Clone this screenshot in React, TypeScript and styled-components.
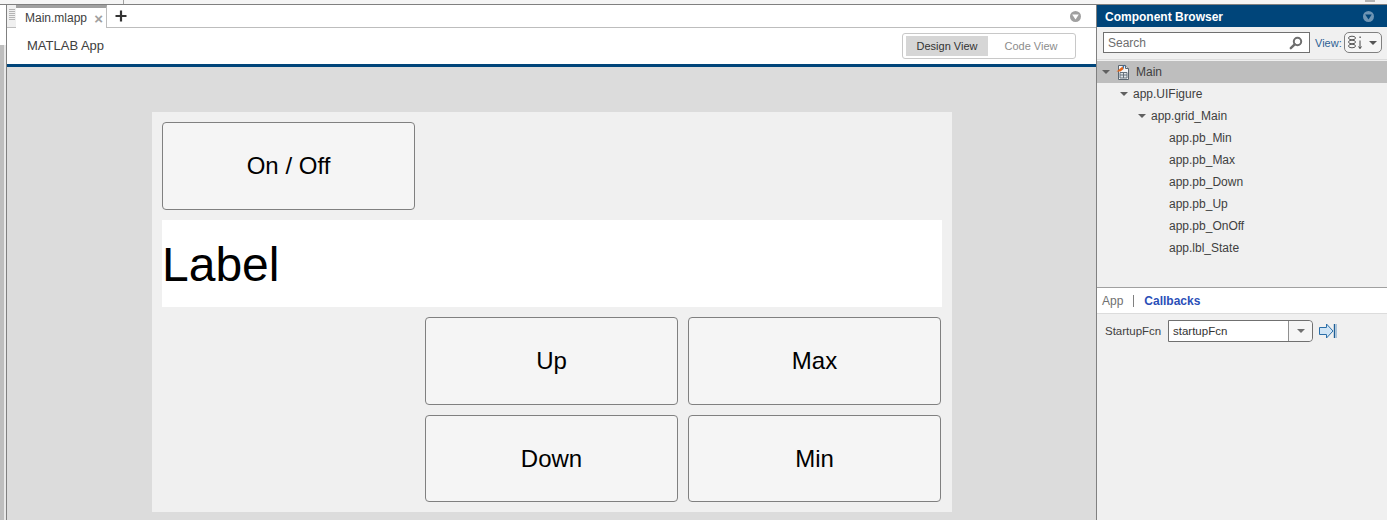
import styled, { createGlobalStyle } from "styled-components";

const GlobalStyle = createGlobalStyle`
  html, body {
    margin: 0;
    padding: 0;
    height: 520px;
    overflow: hidden;
    background: #f0f0f0;
    font-family: "Liberation Sans", Arial, sans-serif;
  }
`;

const treeRows = [
  { label: "app.UIFigure", level: 1, open: true },
  { label: "app.grid_Main", level: 2, open: true },
  { label: "app.pb_Min", level: 3 },
  { label: "app.pb_Max", level: 3 },
  { label: "app.pb_Down", level: 3 },
  { label: "app.pb_Up", level: 3 },
  { label: "app.pb_OnOff", level: 3 },
  { label: "app.lbl_State", level: 3 },
];

function Caret({ color = "#606060" }: { color?: string }) {
  return (
    <svg width="8" height="4" viewBox="0 0 8 4">
      <path d="M0 0h8L4 4z" fill={color} />
    </svg>
  );
}

function PanelMenu({ disc, mark }: { disc: string; mark: string }) {
  return (
    <svg width="11" height="11" viewBox="0 0 11 11">
      <circle cx="5.5" cy="5.5" r="5.5" fill={disc} />
      <path d="M2.2 3.4h6.6L5.5 8.6z" fill={mark} />
    </svg>
  );
}

function FileIcon() {
  return (
    <svg width="14" height="16" viewBox="0 0 14 16">
      <path d="M2.5 1.500h7l3 3v11h-10z" fill="#f4f6f8" stroke="#5b6670" />
      <path d="M9.500 1.500v3h3" fill="#d8dde2" stroke="#5b6670" />
      <path d="M4 8.500h7v5.500H4zM4 11h7M7.500 8.500V14" stroke="#66727c" fill="#dfe4e8" />
      <path d="M.5 7.500L6.500 2.500l1.200 2.400-3.200 2.600z" fill="#e2661c" />
      <path d="M6.500 2.500L8.500 .5l-.8 4.400z" fill="#2f6fb0" />
    </svg>
  );
}

function SearchIcon() {
  return (
    <svg width="14" height="14" viewBox="0 0 14 14">
      <circle cx="8.500" cy="5.500" r="3.700" fill="none" stroke="#6e6e6e" strokeWidth="2" />
      <path d="M5.700 8.300L1.800 12.200" stroke="#6e6e6e" strokeWidth="2.400" strokeLinecap="round" />
    </svg>
  );
}

function SortIcon() {
  return (
    <svg width="17" height="15" viewBox="0 0 17 15">
      <g fill="none" stroke="#555" strokeWidth="1">
        <ellipse cx="5" cy="3" rx="3.500" ry="1.800" />
        <ellipse cx="5" cy="7" rx="3.500" ry="1.800" />
        <ellipse cx="5" cy="11" rx="3.500" ry="1.800" />
      </g>
      <path d="M13 5.500v8M11.500 11.500l1.500 2 1.500-2" fill="none" stroke="#444" />
      <path d="M12.500 1.500h1.200v1.600h-1.200z" fill="#444" />
    </svg>
  );
}

function GoToIcon() {
  return (
    <svg width="18" height="16" viewBox="0 0 18 16">
      <path d="M.5 4.500h7V1L14 8l-6.500 7v-3.500h-7z" fill="#cfe4f5" stroke="#2a6ea8" />
      <path d="M15.500 1v14" stroke="#1f5f96" strokeWidth="1.400" />
      <path d="M17.200 1v14" stroke="#86add0" />
    </svg>
  );
}

function GripIcon() {
  return (
    <svg width="6" height="12" viewBox="0 0 6 12">
      <path d="M0 .5h6M0 2.500h6M0 4.500h6M0 6.500h6M0 8.500h6M0 10.500h6" stroke="#b4b4b4" />
    </svg>
  );
}

export default function App() {
  return (
    <>
      <GlobalStyle />
      <Page>
        <TopStrip>
          <ClippedText>New</ClippedText>
          <StripDivider />
          <StripMark />
        </TopStrip>
        <Workspace>
          <Rail>
            <RailTop />
            <RailThumb />
          </Rail>
          <Editor>
            <TabStrip>
              <Grip>
                <GripIcon />
              </Grip>
              <Tab>
                <TabLabel>Main.mlapp</TabLabel>
                <TabClose>×</TabClose>
              </Tab>
              <AddTab>
                <svg width="12" height="12" viewBox="0 0 12 12">
                  <path d="M6 .5v11M.5 6h11" stroke="#333" strokeWidth="2.200" />
                </svg>
              </AddTab>
              <TabMenu>
                <PanelMenu disc="#a0a0a0" mark="#ffffff" />
              </TabMenu>
            </TabStrip>
            <Toolbar>
              <AppName>MATLAB App</AppName>
              <ViewSwitch>
                <ViewOption $active>Design View</ViewOption>
                <ViewOption>Code View</ViewOption>
              </ViewSwitch>
            </Toolbar>
            <Canvas>
              <Figure>
                <PushButton $col={1} $row={1}>On / Off</PushButton>
                <StateLabel>Label</StateLabel>
                <PushButton $col={2} $row={3}>Up</PushButton>
                <PushButton $col={3} $row={3}>Max</PushButton>
                <PushButton $col={2} $row={4}>Down</PushButton>
                <PushButton $col={3} $row={4}>Min</PushButton>
              </Figure>
            </Canvas>
          </Editor>
          <Browser>
            <BrowserHeader>
              <span>Component Browser</span>
              <PanelMenu disc="#6f95b4" mark="#00457a" />
            </BrowserHeader>
            <SearchRow>
              <SearchBox>
                <SearchText>Search</SearchText>
                <SearchIcon />
              </SearchBox>
              <ViewText>View:</ViewText>
              <ViewPicker>
                <SortIcon />
                <Caret color="#555" />
              </ViewPicker>
            </SearchRow>
            <Tree>
              <RootRow>
                <Caret />
                <FileIcon />
                <span>Main</span>
              </RootRow>
              {treeRows.map((row) => (
                <TreeRow key={row.label} $level={row.level}>
                  {row.open && <Caret />}
                  <span>{row.label}</span>
                </TreeRow>
              ))}
            </Tree>
            <Inspector>
              <InspectorTabs>
                <InspectorTab>App</InspectorTab>
                <TabSeparator />
                <InspectorTab $active>Callbacks</InspectorTab>
              </InspectorTabs>
              <CallbackRow>
                <CallbackName>StartupFcn</CallbackName>
                <CallbackSelect>
                  <CallbackValue>startupFcn</CallbackValue>
                  <CallbackArrow>
                    <Caret color="#707070" />
                  </CallbackArrow>
                </CallbackSelect>
                <GoToIcon />
              </CallbackRow>
            </Inspector>
          </Browser>
        </Workspace>
      </Page>
    </>
  );
}

const Page = styled.div`
  width: 1387px;
  height: 520px;
  display: flex;
  flex-direction: column;
  overflow: hidden;
`;

const TopStrip = styled.div`
  height: 4px;
  flex: none;
  display: flex;
  align-items: flex-start;
  overflow: hidden;
  background: #f5f5f5;
  border-bottom: 1px solid #808080;
`;

const ClippedText = styled.span`
  margin: -12px 0 0 43px;
  width: 80px;
  font-size: 12px;
  line-height: 14px;
  color: #333;
`;

const StripDivider = styled.div`
  width: 1px;
  height: 4px;
  background: #a0a0a0;
`;

const StripMark = styled.div`
  width: 10px;
  height: 2px;
  margin-left: auto;
  margin-right: 12px;
  background: #b4b4b4;
`;

const Workspace = styled.div`
  flex: 1;
  min-height: 0;
  display: flex;
`;

const Rail = styled.div`
  width: 6px;
  flex: none;
  display: flex;
  flex-direction: column;
  background: #e8e8e8;
  border-right: 1px solid #808080;
`;

const RailTop = styled.div`
  height: 40px;
  flex: none;
  background: #ffffff;
`;

const RailThumb = styled.div`
  width: 4px;
  flex: 1;
  background: #bebebe;
`;

const Editor = styled.div`
  flex: 1;
  min-width: 0;
  display: flex;
  flex-direction: column;
`;

const TabStrip = styled.div`
  height: 22px;
  flex: none;
  display: flex;
  align-items: stretch;
  background: #ffffff;
  border-bottom: 1px solid #bdbdbd;
`;

const Grip = styled.div`
  width: 9px;
  flex: none;
  display: flex;
  justify-content: center;
  padding-top: 4px;
  box-sizing: border-box;
  background: #f0f0f0;
`;

const Tab = styled.div`
  width: 91px;
  height: 23px;
  flex: none;
  box-sizing: border-box;
  display: flex;
  align-items: center;
  padding: 0 3px 0 9px;
  background: #ffffff;
  border-top: 3px solid #a0a0a0;
  border-right: 1px solid #bdbdbd;
`;

const TabLabel = styled.span`
  flex: 1;
  font-size: 12px;
  color: #404040;
`;

const TabClose = styled.span`
  font-size: 15px;
  line-height: 1;
  font-weight: 700;
  color: #a0a0a0;
`;

const AddTab = styled.div`
  width: 28px;
  flex: none;
  display: flex;
  align-items: center;
  justify-content: center;
`;

const TabMenu = styled.div`
  margin-left: auto;
  width: 26px;
  display: flex;
  align-items: center;
`;

const Toolbar = styled.div`
  height: 36px;
  flex: none;
  box-sizing: border-box;
  display: flex;
  align-items: center;
  justify-content: space-between;
  padding: 0 20px;
  background: #ffffff;
`;

const AppName = styled.span`
  margin-bottom: 2px;
  font-size: 13px;
  color: #404040;
`;

const ViewSwitch = styled.div`
  width: 174px;
  height: 26px;
  box-sizing: border-box;
  display: flex;
  align-items: center;
  gap: 2px;
  padding: 0 3px;
  background: #ffffff;
  border: 1px solid #c8c8c8;
  border-radius: 3px;
`;

const ViewOption = styled.div<{ $active?: boolean }>`
  width: 82px;
  height: 20px;
  display: flex;
  align-items: center;
  justify-content: center;
  font-size: 11px;
  background: ${({ $active }) => ($active ? "#d6d6d6" : "transparent")};
  color: ${({ $active }) => ($active ? "#333333" : "#8c8c8c")};
`;

const Canvas = styled.div`
  flex: 1;
  min-height: 0;
  box-sizing: border-box;
  padding: 45px 0 0 145px;
  background: #dcdcdc;
  border-top: 3px solid #00457a;
`;

const Figure = styled.div`
  width: 800px;
  height: 400px;
  box-sizing: border-box;
  display: grid;
  grid-template-columns: repeat(3, 253px);
  grid-template-rows: repeat(4, 1fr);
  gap: 10px;
  padding: 10px;
  background: #f0f0f0;
`;

const PushButton = styled.button<{ $col: number; $row: number }>`
  grid-column: ${({ $col }) => $col};
  grid-row: ${({ $row }) => $row};
  margin: 0;
  padding: ${({ $row }) => ($row === 4 ? "1px 0 0" : "0")};
  font-family: inherit;
  font-size: 24px;
  color: #000000;
  background: #f5f5f5;
  border: 1px solid #808080;
  border-radius: 4px;
`;

const StateLabel = styled.div`
  grid-column: 1 / 4;
  grid-row: 2;
  margin-right: -1px;
  padding-top: 2px;
  box-sizing: border-box;
  display: flex;
  align-items: center;
  font-size: 48px;
  color: #000000;
  background: #ffffff;
`;

const Browser = styled.div`
  width: 290px;
  flex: none;
  display: flex;
  flex-direction: column;
  background: #f0f0f0;
  border-left: 1px solid #808080;
`;

const BrowserHeader = styled.div`
  height: 22px;
  flex: none;
  box-sizing: border-box;
  display: flex;
  align-items: center;
  justify-content: space-between;
  padding: 1px 13px 0 8px;
  font-size: 12px;
  font-weight: 700;
  color: #ffffff;
  background: #00457a;
`;

const SearchRow = styled.div`
  height: 33px;
  flex: none;
  box-sizing: border-box;
  display: flex;
  align-items: center;
  padding: 0 5px 1px 6px;
  border-bottom: 1px solid #dcdcdc;
`;

const SearchBox = styled.div`
  width: 207px;
  height: 21px;
  flex: none;
  box-sizing: border-box;
  display: flex;
  align-items: center;
  justify-content: space-between;
  padding: 0 6px 0 4px;
  background: #ffffff;
  border: 1px solid #707070;
`;

const SearchText = styled.span`
  font-size: 12px;
  color: #6e6e6e;
`;

const ViewText = styled.span`
  margin-left: 5px;
  font-size: 11px;
  color: #2d5f93;
`;

const ViewPicker = styled.div`
  width: 38px;
  height: 21px;
  flex: none;
  margin-left: 2px;
  box-sizing: border-box;
  display: flex;
  align-items: center;
  justify-content: space-between;
  padding: 0 4px 0 2px;
  background: #f5f5f5;
  border: 1px solid #808080;
  border-radius: 5px;
`;

const Tree = styled.div`
  height: 228px;
  flex: none;
  box-sizing: border-box;
  padding-top: 1px;
  border-bottom: 1px solid #a0a0a0;
`;

const RootRow = styled.div`
  height: 22px;
  display: flex;
  align-items: center;
  gap: 6px;
  padding-left: 5px;
  font-size: 12px;
  color: #404040;
  background: #bebebe;
`;

const TreeRow = styled.div<{ $level: number }>`
  height: 22px;
  display: flex;
  align-items: center;
  gap: 5px;
  padding-left: ${({ $level }) => ($level === 3 ? 72 : $level * 18 + 5)}px;
  font-size: 12px;
  color: #404040;
`;

const Inspector = styled.div`
  flex: 1;
  min-height: 0;
  display: flex;
  flex-direction: column;
`;

const InspectorTabs = styled.div`
  height: 25px;
  flex: none;
  display: flex;
  align-items: center;
  padding-left: 5px;
  background: #ffffff;
  border-bottom: 1px solid #dcdcdc;
`;

const InspectorTab = styled.span<{ $active?: boolean }>`
  font-size: 12px;
  font-weight: ${({ $active }) => ($active ? 700 : 400)};
  color: ${({ $active }) => ($active ? "#2b4fb8" : "#707070")};
`;

const TabSeparator = styled.div`
  width: 1px;
  height: 12px;
  margin: 0 10px;
  background: #808080;
`;

const CallbackRow = styled.div`
  display: flex;
  align-items: center;
  padding: 6px 0 0 8px;
`;

const CallbackName = styled.span`
  width: 63px;
  flex: none;
  font-size: 11.5px;
  color: #404040;
`;

const CallbackSelect = styled.div`
  width: 145px;
  height: 22px;
  flex: none;
  box-sizing: border-box;
  display: flex;
  margin-right: 6px;
  background: #ffffff;
  border: 1px solid #707070;
  border-radius: 0 4px 4px 0;
`;

const CallbackValue = styled.span`
  flex: 1;
  padding-left: 4px;
  font-size: 11.5px;
  line-height: 20px;
  color: #333333;
`;

const CallbackArrow = styled.div`
  width: 23px;
  flex: none;
  display: flex;
  align-items: center;
  justify-content: center;
  background: #f5f5f5;
  border-left: 1px solid #909090;
  border-radius: 0 4px 4px 0;
`;
